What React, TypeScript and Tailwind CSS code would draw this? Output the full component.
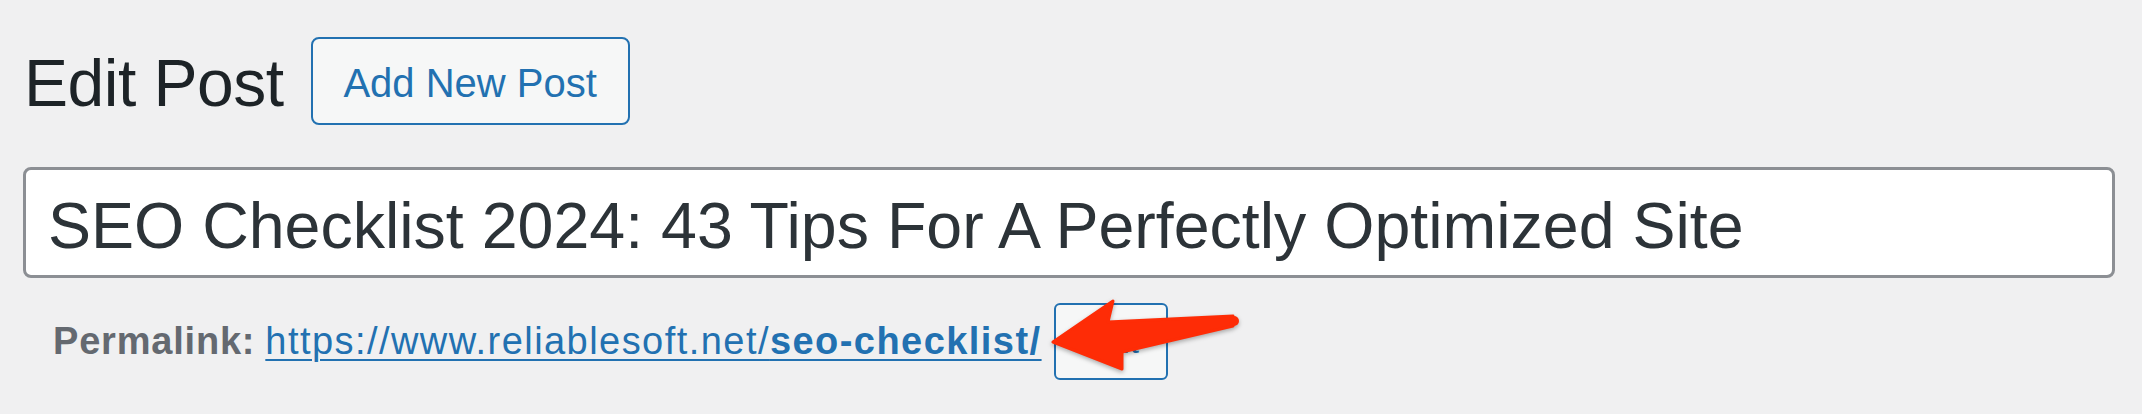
export default function App() {
  return (
    <div className="relative min-h-screen bg-[#f0f0f1] pl-[23px] pr-[27px] pt-[37px] font-['Liberation_Sans',Arial,sans-serif]">
      {/* Title row */}
      <div className="flex items-start">
        <h1 className="ml-[1px] mt-[13px] text-[66px] font-normal leading-none tracking-[-0.5px] text-[#1d2327]">Edit Post</h1>
        <button className="ml-[27px] flex h-[88px] w-[319px] items-center justify-center rounded-[8px] border-2 border-[#2271b1] bg-[#f6f7f7] pt-[4px] text-[40px] text-[#2271b1]">
          Add New Post
        </button>
      </div>

      {/* Post title */}
      <div className="mt-[42px] h-[111px] rounded-[8px] border-[3px] border-[#8c8f94] bg-white pl-[22px] pt-[19px] text-[64.5px] leading-[74px] text-[#2c3338]">
        SEO Checklist 2024: 43 Tips For A Perfectly Optimized Site
      </div>

      {/* Permalink */}
      <div className="mt-[25px] flex items-center pl-[30px] text-[38px]">
        <span className="font-bold tracking-[0.8px] text-[#646970]">Permalink:</span>
        <span className="w-[10px]" />
        <a className="tracking-[1.45px] text-[#2271b1] underline decoration-[2px] underline-offset-[5px]">
          https://www.reliablesoft.net/<span className="font-bold">seo-checklist/</span>
        </a>
        <button className="ml-[12px] flex h-[77px] w-[114px] items-center justify-center rounded-[6px] border-2 border-[#2271b1] bg-[#f6f7f7] text-[33px] text-[#2271b1]">
          Edit
        </button>
      </div>

      {/* Red annotation arrow */}
      <svg
        className="absolute left-[1045px] top-[295px] drop-shadow-[0_2px_2px_rgba(0,0,0,0.3)]"
        width="200"
        height="80"
        viewBox="0 0 200 80"
      >
        <path
          d="M8 47 L68 6 L63 27 L188 21 L188 31 L77 57 L77 74 Z"
          fill="#fe2c06"
          stroke="#fe2c06"
          strokeWidth="3"
          strokeLinejoin="round"
        />
        <circle cx="189" cy="26" r="5" fill="#fe2c06" />
      </svg>
    </div>
  );
}
